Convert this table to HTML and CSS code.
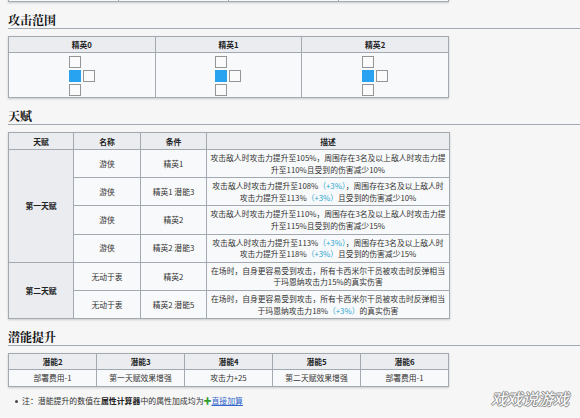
FILE: index.html
```html
<!DOCTYPE html>
<html lang="zh">
<head>
<meta charset="utf-8">
<title>干员</title>
<link rel="stylesheet" href="styles.css">
</head>
<body>
<div class="page">
  <table class="wt prev">
    <tr><td></td><td></td><td></td><td></td></tr>
  </table>

  <h2>攻击范围</h2>
  <table class="wt range">
    <tr><th>精英0</th><th>精英1</th><th>精英2</th></tr>
    <tr>
      <td><div class="grid"><span class="sq"></span><span></span><span class="sq me"></span><span class="sq"></span><span class="sq"></span><span></span></div></td>
      <td><div class="grid"><span class="sq"></span><span></span><span class="sq me"></span><span class="sq"></span><span class="sq"></span><span></span></div></td>
      <td><div class="grid"><span class="sq"></span><span></span><span class="sq me"></span><span class="sq"></span><span class="sq"></span><span></span></div></td>
    </tr>
  </table>

  <h2>天赋</h2>
  <table class="wt talent">
    <colgroup><col class="c1"><col class="c2"><col class="c3"><col class="c4"></colgroup>
    <tr><th>天赋</th><th>名称</th><th>条件</th><th>描述</th></tr>
    <tr><th rowspan="4" class="rh">第一天赋</th><td>游侠</td><td>精英1</td><td class="desc">攻击敌人时攻击力提升至105%，周围存在3名及以上敌人时攻击力提<br>升至110%且受到的伤害减少10%</td></tr>
    <tr><td>游侠</td><td>精英1 潜能3</td><td class="desc">攻击敌人时攻击力提升至108%<span class="up">（+3%）</span>，周围存在3名及以上敌人时<br>攻击力提升至113%<span class="up">（+3%）</span>且受到的伤害减少10%</td></tr>
    <tr><td>游侠</td><td>精英2</td><td class="desc">攻击敌人时攻击力提升至110%，周围存在3名及以上敌人时攻击力提<br>升至115%且受到的伤害减少15%</td></tr>
    <tr><td>游侠</td><td>精英2 潜能3</td><td class="desc">攻击敌人时攻击力提升至113%<span class="up">（+3%）</span>，周围存在3名及以上敌人时<br>攻击力提升至118%<span class="up">（+3%）</span>且受到的伤害减少15%</td></tr>
    <tr><th rowspan="2" class="rh">第二天赋</th><td>无动于衷</td><td>精英2</td><td class="desc">在场时，自身更容易受到攻击，所有卡西米尔干员被攻击时反弹相当<br>于玛恩纳攻击力15%的真实伤害</td></tr>
    <tr><td>无动于衷</td><td>精英2 潜能5</td><td class="desc">在场时，自身更容易受到攻击，所有卡西米尔干员被攻击时反弹相当<br>于玛恩纳攻击力18%<span class="up">（+3%）</span>的真实伤害</td></tr>
  </table>

  <h2>潜能提升</h2>
  <table class="wt pot">
    <tr><th>潜能2</th><th>潜能3</th><th>潜能4</th><th>潜能5</th><th>潜能6</th></tr>
    <tr><td>部署费用-1</td><td>第一天赋效果增强</td><td>攻击力+25</td><td>第二天赋效果增强</td><td>部署费用-1</td></tr>
  </table>

  <ul class="note">
    <li>注：潜能提升的数值在<b>属性计算器</b>中的属性加成均为<span class="plus">✚</span><a class="link">直接加算</a></li>
  </ul>
</div>
<div class="wm">戏戏说游戏</div>
</body>
</html>
```

FILE: styles.css
```css
html, body {
  margin: 0;
  padding: 0;
}

body {
  width: 580px;
  height: 418px;
  overflow: hidden;
  position: relative;
  background: #f6f6f6;
  color: #222;
  font-family: "Noto Sans CJK SC", "Microsoft YaHei", sans-serif;
}

.page {
  padding-left: 8px;
}

h2 {
  margin: 10px 0 7px;
  font-family: "Noto Serif CJK SC", "Noto Sans CJK SC", serif;
  font-size: 12px;
  line-height: 16px;
  font-weight: bold;
  color: #111;
  border-bottom: 1px solid #a2a9b1;
}

.wt {
  border-collapse: collapse;
  table-layout: fixed;
  width: 441px;
  background: #f8f9fa;
  border: 1px solid #a2a9b1;
  box-shadow: 0 1px 2px rgba(0, 0, 0, 0.18);
  font-size: 7.8px;
}

.wt th,
.wt td {
  border: 1px solid #a2a9b1;
  padding: 2px 3px;
  text-align: center;
  vertical-align: middle;
  line-height: 11px;
}

.wt th {
  background: #eaecf0;
  font-weight: bold;
  color: #202122;
}

.wt td {
  color: #333;
}

.prev {
  margin-top: -20px;
}

.prev td {
  height: 16px;
}

.range td {
  padding: 3px 0 1px;
}

.grid {
  display: grid;
  grid-template-columns: repeat(2, 12px);
  grid-auto-rows: 12px;
  gap: 2px;
  justify-content: center;
}

.grid span {
  box-sizing: border-box;
}

.grid .sq {
  border: 1px solid #959595;
  background: #fbfbfb;
}

.grid .me {
  border-color: #27a3ef;
  background: #27a3ef;
}

.talent .c1 { width: 65px; }
.talent .c2 { width: 67px; }
.talent .c3 { width: 66px; }
.talent .c4 { width: 243px; }

.talent th {
  padding: 2.5px 3px;
}

.talent td,
.talent th.rh {
  padding: 2px 2px;
  line-height: 11.6px;
}

.talent .desc {
  white-space: nowrap;
}

.up {
  color: #2aa6d0;
}

.pot td {
  padding: 2px 3px;
  line-height: 12px;
}

.note {
  list-style: none;
  margin: 8px 0 0;
  padding-left: 7px;
  font-size: 7.9px;
  line-height: 12px;
  color: #333;
}

.note li {
  display: flex;
  align-items: center;
}

.note li::before {
  content: "";
  width: 3px;
  height: 3px;
  border-radius: 50%;
  background: #444;
  margin-right: 4px;
}

.note b {
  color: #222;
}

.plus {
  color: #2f9a2f;
  font-weight: bold;
}

.link {
  color: #3366cc;
  text-decoration: underline;
}

.wm {
  position: absolute;
  left: 491px;
  top: 388px;
  font-size: 16px;
  line-height: 20px;
  font-style: italic;
  color: #ffffff;
  letter-spacing: -0.5px;
  text-shadow: 1px 0 0 #8a8a8a, -1px 0 0 #8a8a8a, 0 1px 0 #8a8a8a, 0 -1px 0 #8a8a8a;
}
```
